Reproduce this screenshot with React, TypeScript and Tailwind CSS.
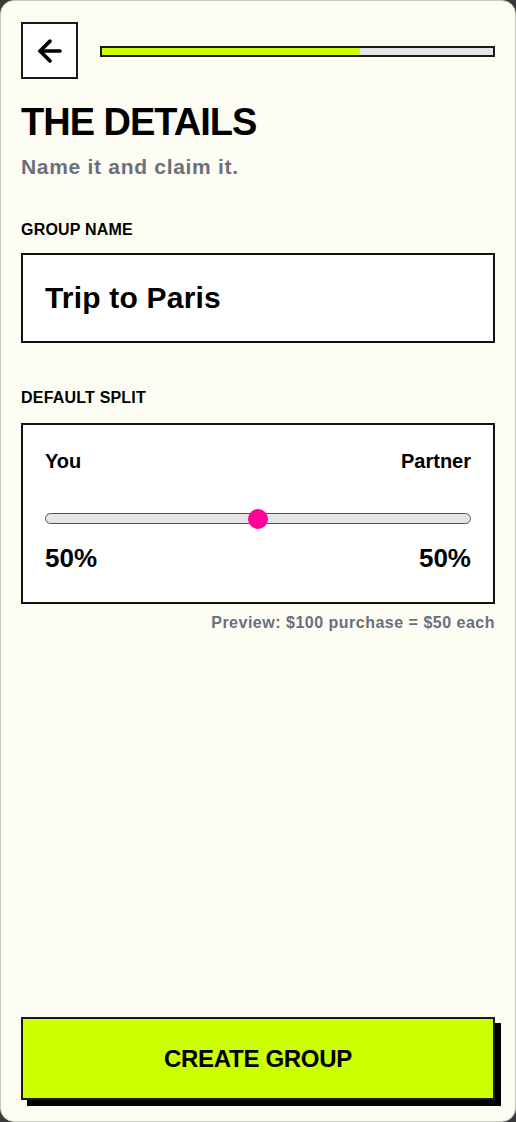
import { ArrowLeft } from "lucide-react";

const sans = "font-['Liberation_Sans',Arial,sans-serif]";

export default function App() {
    return (
        <div className="h-[1122px] w-[516px] bg-[#3a3a3a]">
            <div className={`flex h-full flex-col rounded-[14px] border border-[#c8c8c0] bg-[#fdfdf4] px-5 pt-[21px] pb-[21px] text-black ${sans}`}>
                {/* Top: back + progress */}
                <div className="flex items-center gap-[22px]">
                    <button className="flex h-[57px] w-[57px] shrink-0 items-center justify-center border-2 border-[#1a1a1a] bg-white">
                        <ArrowLeft className="h-[34px] w-[34px]" strokeWidth={2.6} />
                    </button>
                    <div className="mt-[1px] h-[11px] flex-1 border-2 border-[#1a1a1a] bg-[#e4e4e4]">
                        <div className="h-full w-[66%] bg-[#ccff00]" />
                    </div>
                </div>

                {/* Heading */}
                <h1 className="mt-[21px] text-[38px] leading-[44px] font-bold tracking-[-1px]">THE DETAILS</h1>
                <p className="mt-[10px] text-[21px] leading-[26px] font-bold tracking-[0.7px] text-[#6b6f7c]">Name it and claim it.</p>

                {/* Group name */}
                <label className="mt-[40px] text-[16px] leading-[20px] font-bold tracking-[0.2px]">GROUP NAME</label>
                <div className="mt-[13px] flex h-[90px] items-center border-2 border-[#111] bg-white px-[22px]">
                    <span className="pb-[2px] text-[30px] font-bold tracking-[0.2px]">Trip to Paris</span>
                </div>

                {/* Default split */}
                <label className="mt-[45px] text-[16px] leading-[20px] font-bold tracking-[0.2px]">DEFAULT SPLIT</label>
                <div className="mt-[15px] flex h-[181px] flex-col border-2 border-[#111] bg-white px-[22px] pt-[24px]">
                    <div className="flex justify-between text-[20px] leading-[24px] font-bold">
                        <span>You</span>
                        <span>Partner</span>
                    </div>
                    <div className="relative mt-[40px] h-[11px] rounded-full border border-[#555] bg-[#e5e5e8]">
                        <span className="absolute top-1/2 left-1/2 h-5 w-5 -translate-x-1/2 -translate-y-1/2 rounded-full bg-[#ff0099]" />
                    </div>
                    <div className="mt-[19px] flex justify-between text-[26px] leading-[30px] font-bold">
                        <span>50%</span>
                        <span>50%</span>
                    </div>
                </div>
                <p className="mt-[9px] text-right text-[16px] leading-[20px] font-bold tracking-[0.5px] text-[#6b6f7c]">
                    Preview: $100 purchase = $50 each
                </p>

                {/* CTA */}
                <button className="mt-auto flex h-[83px] w-full items-center justify-center border-2 border-[#1a1a1a] bg-[#ccff00] text-[24px] font-bold tracking-[-0.3px] shadow-[6px_6px_0_#000]">
                    CREATE GROUP
                </button>
            </div>
        </div>
    );
}
